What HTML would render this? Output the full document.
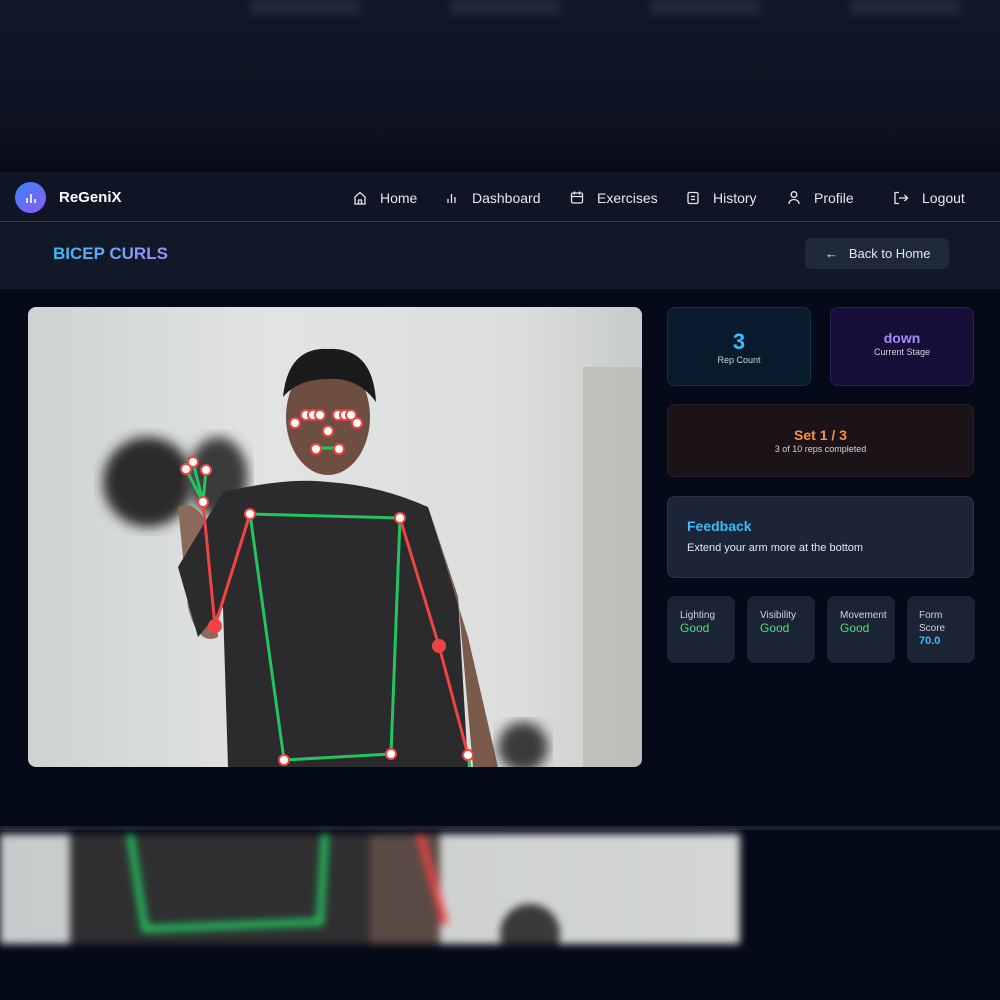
<!DOCTYPE html>
<html><head><meta charset="utf-8"><style>
*{margin:0;padding:0;box-sizing:border-box}
body{width:1000px;height:1000px;background:#050a18;font-family:"Liberation Sans",sans-serif;position:relative;overflow:hidden;color:#e5e7eb}
.abs{position:absolute}
.top{left:0;top:0;width:1000px;height:170px;background:linear-gradient(#121828,#0e1322 70%,#080c18)}
.nav{left:0;top:172px;width:1000px;height:50px;background:#0f1524;border-bottom:1px solid #3a4050}
.hdr{left:0;top:223px;width:1000px;height:66px;background:#111827}
.navi{top:190px;font-size:14px;color:#e5e7eb}
.ico{top:190px}
.card{border-radius:8px;text-align:center}
.sm{border-radius:8px;background:#1b2435;width:68px;height:67px;top:596px;padding:13px 0 0 13px;font-size:10px;color:#d1d5db;line-height:13px}
.sm b{display:block;color:#4ade80;font-size:12px;font-weight:normal}
</style></head><body>
<div class="abs top"></div>
<div class="abs" style="left:250px;top:0;width:750px;height:14px;filter:blur(4px);background:repeating-linear-gradient(90deg,#2e3444 0 110px,transparent 110px 200px);opacity:.6"></div>
<div class="abs nav"></div>
<div class="abs" style="left:15px;top:182px;width:31px;height:31px;border-radius:50%;background:linear-gradient(135deg,#3b82f6,#8b5cf6)"></div>
<svg class="abs" style="left:23px;top:190px" width="16" height="16"><path d="M4 13V8M8 13V4M12 13V9" stroke="#fff" stroke-width="1.6"/></svg>
<div class="abs" style="left:59px;top:189px;font-size:15px;font-weight:bold;color:#fff">ReGeniX</div>
<svg class="abs ico" style="left:353px" width="14" height="16"><path d="M2 7L7 2.5 12 7V14H2Z M5.5 14V10h3v4" fill="none" stroke="#e5e7eb" stroke-width="1.3"/></svg>
<div class="abs navi" style="left:380px">Home</div>
<svg class="abs ico" style="left:446px" width="12" height="16"><path d="M2 13V9M5.5 13V4M9 13V7" stroke="#e5e7eb" stroke-width="1.3"/></svg>
<div class="abs navi" style="left:472px">Dashboard</div>
<svg class="abs ico" style="left:570px" width="14" height="16"><rect x="1.5" y="3" width="11" height="10" rx="1.5" fill="none" stroke="#e5e7eb" stroke-width="1.3"/><path d="M1.5 6.5h11M4.5 1.5v3M9.5 1.5v3" stroke="#e5e7eb" stroke-width="1.3"/></svg>
<div class="abs navi" style="left:597px">Exercises</div>
<svg class="abs ico" style="left:686px" width="14" height="16"><rect x="2" y="2.5" width="10" height="11" rx="1.5" fill="none" stroke="#e5e7eb" stroke-width="1.3"/><path d="M5 6.5h4M5 9.5h4" stroke="#e5e7eb" stroke-width="1.2"/></svg>
<div class="abs navi" style="left:713px">History</div>
<svg class="abs ico" style="left:787px" width="14" height="16"><circle cx="7" cy="4.5" r="2.8" fill="none" stroke="#e5e7eb" stroke-width="1.3"/><path d="M2 14c0-3 2.5-4.5 5-4.5s5 1.5 5 4.5" fill="none" stroke="#e5e7eb" stroke-width="1.3"/></svg>
<div class="abs navi" style="left:814px">Profile</div>
<svg class="abs ico" style="left:893px" width="16" height="16"><path d="M6 2.5H2v11h4M6 8h8M11.5 5l3 3-3 3" fill="none" stroke="#e5e7eb" stroke-width="1.3"/></svg>
<div class="abs navi" style="left:922px">Logout</div>
<div class="abs hdr"></div>
<div class="abs" style="left:53px;top:244px;font-size:17px;font-weight:bold;background:linear-gradient(90deg,#38bdf8,#a78bfa);-webkit-background-clip:text;color:transparent">BICEP CURLS</div>
<div class="abs" style="left:805px;top:238px;width:144px;height:31px;border-radius:6px;background:#1e293b;font-size:13px;color:#e5e7eb;padding:8px 0 0 20px">←&nbsp;&nbsp;&nbsp;Back to Home</div>

<div class="abs" style="left:28px;top:307px;width:614px;height:460px;border-radius:8px;overflow:hidden;background:linear-gradient(90deg,#cfd2d3,#e2e4e4 40%,#dcdedd 80%,#c8cbcb)">
<svg width="614" height="460" style="position:absolute;left:0;top:0">
<defs><filter id="b"><feGaussianBlur stdDeviation="6"/></filter></defs>
<rect x="555" y="60" width="60" height="400" fill="#b8b4ac" opacity=".6"/>
<ellipse cx="120" cy="175" rx="45" ry="45" fill="#2a2a2a" filter="url(#b)"/>
<ellipse cx="190" cy="170" rx="30" ry="40" fill="#3a3a3a" filter="url(#b)"/>
<path d="M150 200 Q170 190 185 230 L190 330 Q170 340 160 300 Z" fill="#8a6a5a"/>
<path d="M195 185 Q260 170 300 175 Q350 178 400 200 L430 290 L440 460 L200 460 L195 300 L170 330 L150 260 Z" fill="#2b2b2d"/>
<path d="M400 200 L430 290 L445 460 L470 460 L440 330 Z" fill="#7a5a4a"/>
<ellipse cx="300" cy="110" rx="42" ry="58" fill="#6d4e40"/>
<path d="M255 90 Q260 40 300 42 Q345 40 348 95 Q330 70 300 72 Q270 72 255 90Z" fill="#1b1b1b"/>
<ellipse cx="495" cy="440" rx="25" ry="25" fill="#3a3a3a" filter="url(#b)"/>
<g stroke-width="3" fill="none">
<path d="M222 207 L372 211 L363 447 L256 453 Z" stroke="#22c55e"/>
<path d="M222 207 L187 319 L175 195 M372 211 L411 339 L440 448" stroke="#ef4444"/>
<path d="M175 195 L158 162 M175 195 L165 155 M175 195 L178 163 M440 448 L442 460" stroke="#22c55e"/>
<path d="M290 141 L310 141" stroke="#22c55e"/>
</g>
<g fill="#fff" stroke="#ef4444" stroke-width="2">
<circle cx="222" cy="207" r="5"/><circle cx="372" cy="211" r="5"/><circle cx="363" cy="447" r="5"/><circle cx="256" cy="453" r="5"/><circle cx="440" cy="448" r="5"/><circle cx="175" cy="195" r="5"/><circle cx="158" cy="162" r="5"/><circle cx="165" cy="155" r="5"/><circle cx="178" cy="163" r="5"/>
<circle cx="288" cy="142" r="5"/><circle cx="311" cy="142" r="5"/><circle cx="300" cy="124" r="5"/>
<circle cx="267" cy="116" r="5"/><circle cx="278" cy="108" r="5"/><circle cx="285" cy="108" r="5"/><circle cx="292" cy="108" r="5"/><circle cx="310" cy="108" r="5"/><circle cx="317" cy="108" r="5"/><circle cx="323" cy="108" r="5"/><circle cx="329" cy="116" r="5"/>
</g>
<circle cx="187" cy="319" r="7" fill="#ef4444"/><circle cx="411" cy="339" r="7" fill="#ef4444"/>
</svg></div>

<div class="abs card" style="left:667px;top:307px;width:144px;height:79px;background:#081a2c;border:1px solid #12324a;padding-top:21px"><div style="font-size:22px;font-weight:bold;color:#38bdf8">3</div><div style="font-size:9px;color:#cbd5e1">Rep Count</div></div>
<div class="abs card" style="left:830px;top:307px;width:144px;height:79px;background:#170f3a;border:1px solid #2a2055;padding-top:22px"><div style="font-size:14px;font-weight:bold;color:#a78bfa">down</div><div style="font-size:9px;color:#cbd5e1;margin-top:1px">Current Stage</div></div>
<div class="abs card" style="left:667px;top:404px;width:307px;height:73px;background:#1c1319;border:1px solid #2c1f25;padding-top:22px"><div style="font-size:14px;font-weight:bold;color:#fb923c">Set 1 / 3</div><div style="font-size:9px;color:#d1d5db;margin-top:1px">3 of 10 reps completed</div></div>
<div class="abs" style="left:667px;top:496px;width:307px;height:82px;border-radius:8px;background:#1b2537;border:1px solid #2b3548;padding:21px 0 0 19px"><div style="font-size:14px;font-weight:bold;color:#38bdf8">Feedback</div><div style="font-size:11px;color:#e5e7eb;margin-top:8px">Extend your arm more at the bottom</div></div>
<div class="abs sm" style="left:667px">Lighting<b>Good</b></div>
<div class="abs sm" style="left:747px">Visibility<b>Good</b></div>
<div class="abs sm" style="left:827px">Movement<b>Good</b></div>
<div class="abs sm" style="left:907px;padding-left:12px">Form<br>Score<b style="color:#38bdf8;font-weight:bold;font-size:11px">70.0</b></div>

<div class="abs" style="left:0;top:826px;width:1000px;height:4px;background:#1a1f2c"></div>
<div class="abs" style="left:0;top:834px;width:740px;height:110px;overflow:hidden;filter:blur(4px);background:linear-gradient(90deg,#c8cbcb,#d4d6d6)">
<svg width="740" height="110"><rect x="70" y="0" width="300" height="110" fill="#2f2f31"/><rect x="370" y="0" width="70" height="110" fill="#5a4a44"/><circle cx="530" cy="100" r="30" fill="#3a3a3a"/>
<path d="M130 0 L145 95 L320 88 L325 0" stroke="#22c55e" stroke-width="7" fill="none"/><path d="M420 0 L445 90" stroke="#ef4444" stroke-width="7"/></svg></div>
</body></html>
